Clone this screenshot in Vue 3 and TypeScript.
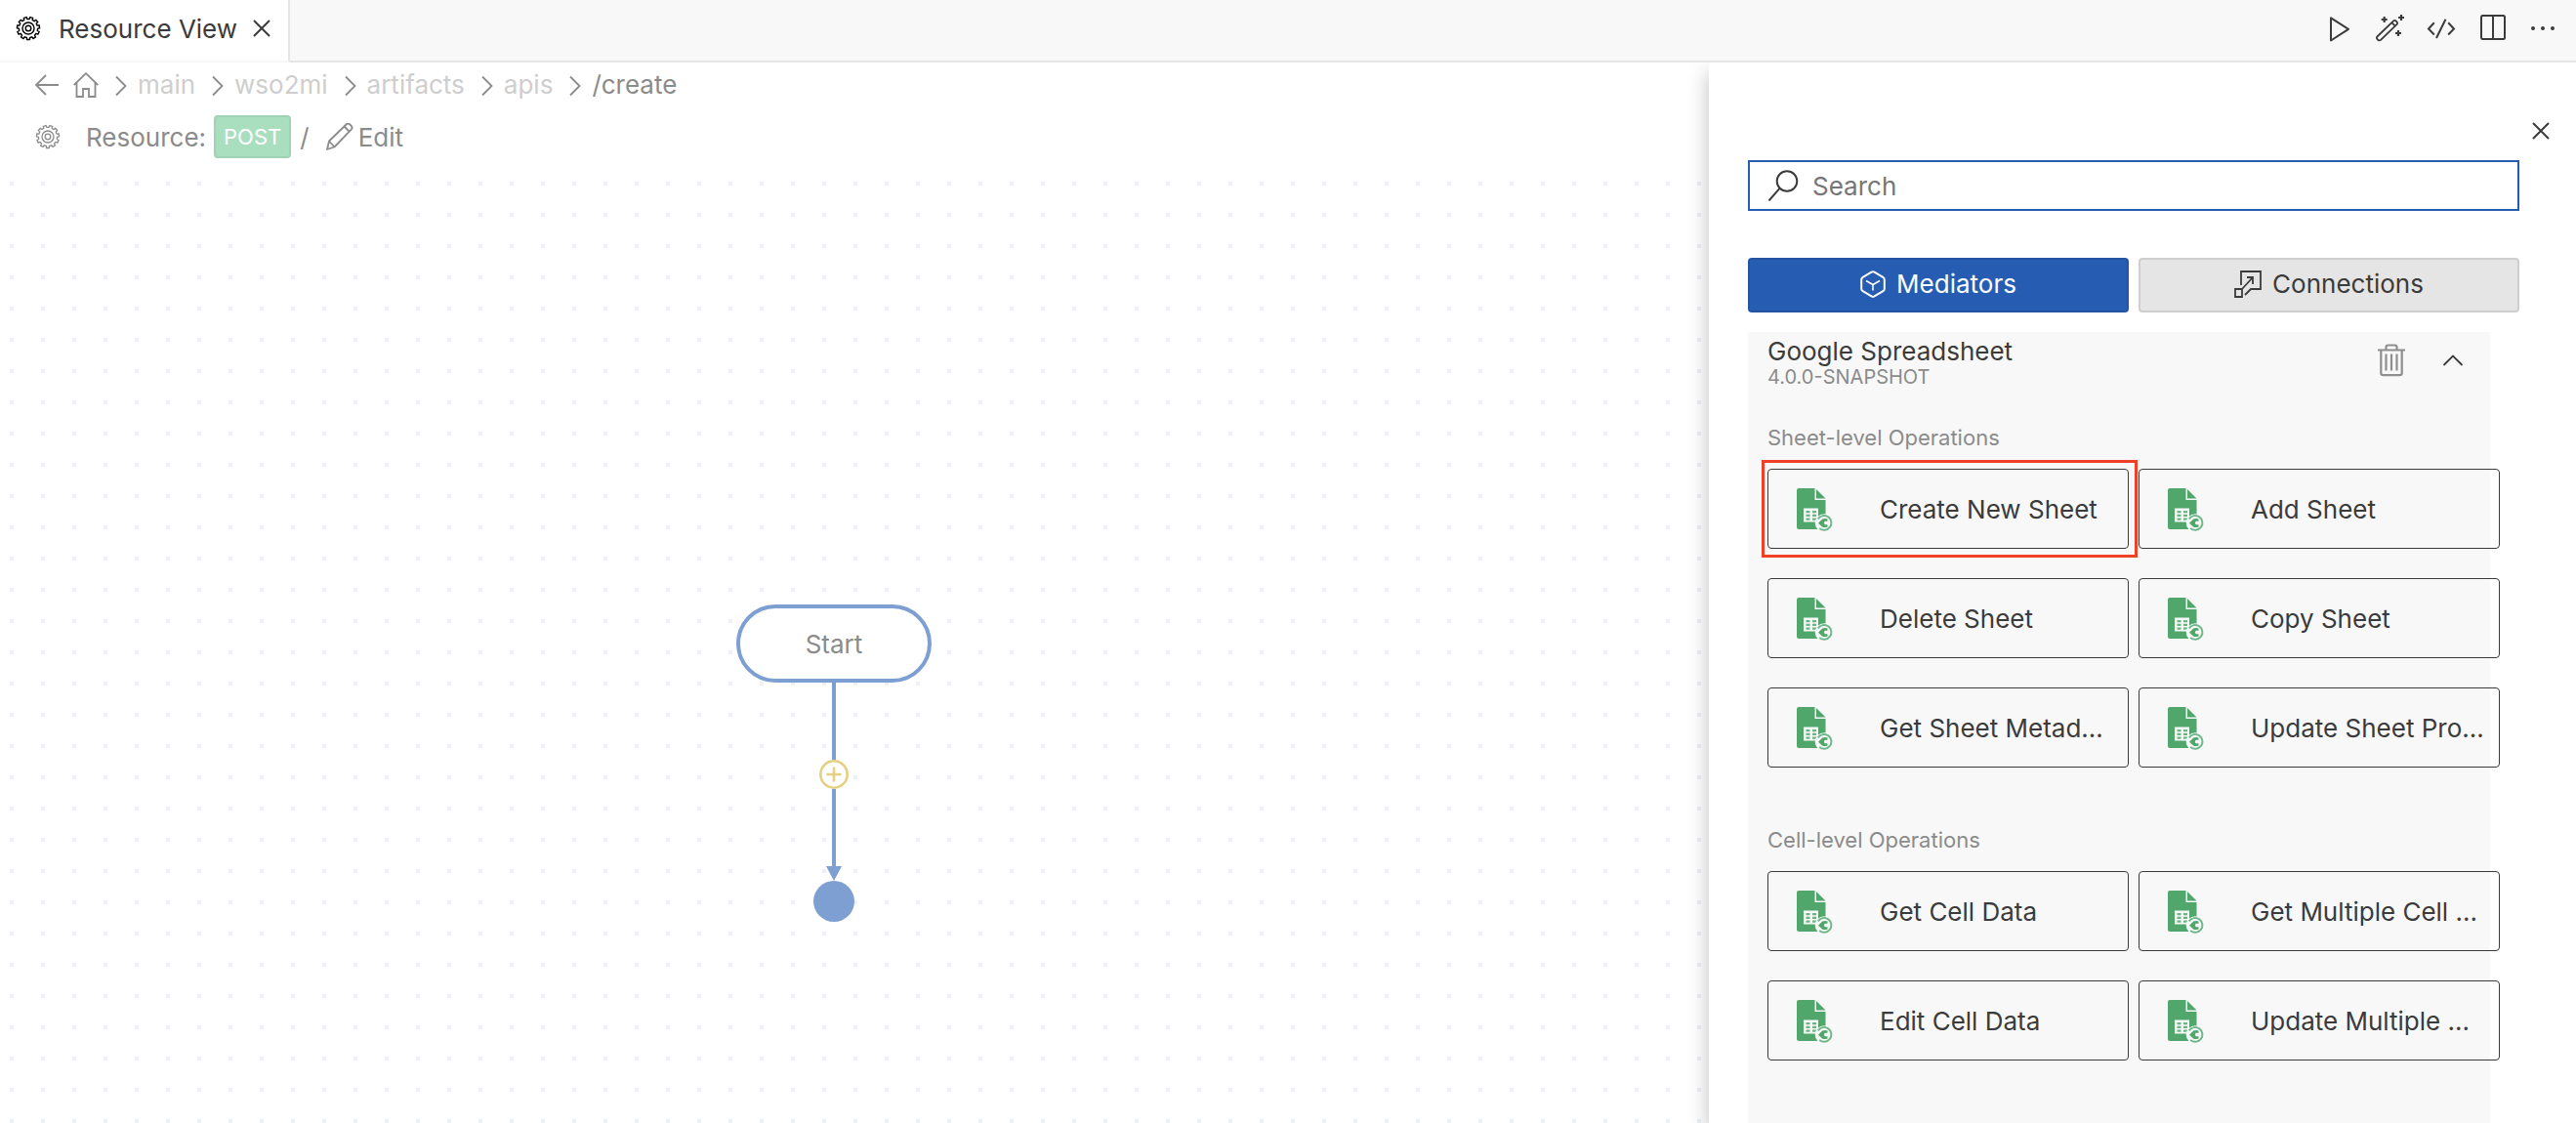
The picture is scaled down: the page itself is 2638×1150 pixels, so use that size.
<script setup lang="ts">
import { ref } from 'vue'

interface Operation {
  name: string
  highlighted?: boolean
}

interface OperationGroup {
  title: string
  operations: Operation[]
}

const query = ref('')
const crumbs: string[] = ['main', 'wso2mi', 'artifacts', 'apis']

const groups: OperationGroup[] = [
  {
    title: 'Sheet-level Operations',
    operations: [
      { name: 'Create New Sheet', highlighted: true },
      { name: 'Add Sheet' },
      { name: 'Delete Sheet' },
      { name: 'Copy Sheet' },
      { name: 'Get Sheet Metad...' },
      { name: 'Update Sheet Pro...' },
    ],
  },
  {
    title: 'Cell-level Operations',
    operations: [
      { name: 'Get Cell Data' },
      { name: 'Get Multiple Cell ...' },
      { name: 'Edit Cell Data' },
      { name: 'Update Multiple ...' },
    ],
  },
]

// Outline of a gear with evenly spaced teeth, centred in a 26 x 26 box.
function gearOutline(teeth: number, outer: number, inner: number): string {
  const step = (Math.PI * 2) / teeth
  const points: string[] = []
  for (let i = 0; i < teeth; i++) {
    const mid = (i + 0.5) * step - Math.PI / 2
    const corners: [number, number][] = [
      [inner, -0.3],
      [outer, -0.22],
      [outer, 0.22],
      [inner, 0.3],
    ]
    for (const [radius, offset] of corners) {
      const angle = mid + offset * step
      points.push(`${(13 + radius * Math.cos(angle)).toFixed(2)} ${(13 + radius * Math.sin(angle)).toFixed(2)}`)
    }
  }
  return `M${points.join('L')}Z`
}

const gear = gearOutline(11, 11.6, 9.6)
</script>

<template>
  <div class="editor">
    <header class="tabbar">
      <div class="tab">
        <svg class="icon tab-gear" width="26" height="26" viewBox="0 0 26 26" stroke-width="1.4">
          <path :d="gear" />
          <circle cx="13" cy="13" r="6" />
          <circle cx="13" cy="13" r="2.8" />
        </svg>
        <span class="tab-title">Resource View</span>
        <button class="bare" type="button" aria-label="Close tab">
          <svg class="icon" width="18" height="18" viewBox="0 0 18 18" stroke-width="2"><path d="M1 1l16 16M17 1L1 17" /></svg>
        </button>
      </div>
      <nav class="actions" aria-label="Editor actions">
        <button class="bare" type="button" aria-label="Run">
          <svg class="icon" width="32" height="32" viewBox="0 0 32 32" stroke-width="2"><path d="M7 3.3v23.2L25 14.8z" stroke-linejoin="round" /></svg>
        </button>
        <button class="bare" type="button" aria-label="Generate">
          <svg class="icon" width="32" height="32" viewBox="0 0 32 32" stroke-width="1.8">
            <rect x="-0.8" y="13.7" width="26.6" height="5" rx="2" transform="rotate(-44 12.5 16.2)" />
            <path d="M17 7.8l3.6 3.6" />
            <path d="M9.7 2v6M6.7 5h6M27 0v6M24 3h6M24 16v6M21 19h6" stroke-width="2.2" />
          </svg>
        </button>
        <button class="bare" type="button" aria-label="Show source">
          <svg class="icon" width="32" height="32" viewBox="0 0 32 32" stroke-width="2"><path d="M8.8 8.3L3 14.5l5.8 6M23.2 8.3l5.8 6.2-5.8 6M20.5 4.8L11 24" /></svg>
        </button>
        <button class="bare" type="button" aria-label="Split editor">
          <svg class="icon" width="32" height="32" viewBox="0 0 32 32" stroke-width="2"><rect x="5" y="1" width="24" height="24" rx="1.5" /><path d="M17 1v24" /></svg>
        </button>
        <button class="bare" type="button" aria-label="More actions">
          <svg width="32" height="32" viewBox="0 0 32 32" fill="currentColor"><circle cx="6" cy="14" r="2" /><circle cx="16" cy="14" r="2" /><circle cx="26" cy="14" r="2" /></svg>
        </button>
      </nav>
    </header>

    <div class="workspace">
      <main class="stage">
        <nav class="breadcrumbs" aria-label="Breadcrumb">
          <button class="bare" type="button" aria-label="Back">
            <svg class="icon" width="26" height="26" viewBox="0 0 26 26" stroke-width="1.8"><path d="M12 3L2 13l10 10M2 13h23" /></svg>
          </button>
          <button class="bare home" type="button" aria-label="Home">
            <svg class="icon" width="26" height="26" viewBox="0 0 26 26" stroke-width="1.8"><path d="M0.8 13L13 1.2 25.2 13M3.5 10.5V25H10v-8h6v8h6.5V10.5" /></svg>
          </button>
          <template v-for="crumb in crumbs" :key="crumb">
            <svg class="icon chevron" width="12" height="22" viewBox="0 0 12 22" stroke-width="1.8"><path d="M1 1.5L10.5 11 1 20.5" /></svg>
            <a href="#" class="crumb">{{ crumb }}</a>
          </template>
          <svg class="icon chevron" width="12" height="22" viewBox="0 0 12 22" stroke-width="1.8"><path d="M1 1.5L10.5 11 1 20.5" /></svg>
          <span class="crumb-current">/create</span>
        </nav>

        <div class="resource">
          <svg class="icon" width="26" height="26" viewBox="0 0 26 26" stroke-width="1.3">
            <path :d="gear" />
            <circle cx="13" cy="13" r="6" />
            <circle cx="13" cy="13" r="2.8" />
          </svg>
          <span class="resource-label">Resource:</span>
          <span class="method">POST</span>
          <span class="path">/</span>
          <button class="bare edit" type="button">
            <svg class="icon" width="30" height="30" viewBox="0 0 30 30" stroke-width="1.8">
              <path d="M2 28l2-8.5L21.5 2.5c1.2-1.2 2.5-1.2 3.8 0l1.4 1.4c1.2 1.3 1.2 2.5 0 3.8L9.5 25.5zM4 19.5l5.5 6M19.5 4.5l5.500 5.500" stroke-linejoin="round" />
            </svg>
            <span class="edit-label">Edit</span>
          </button>
        </div>

        <section class="canvas" aria-label="Resource flow">
          <div class="flow">
            <div class="start">Start</div>
            <div class="link"></div>
            <button class="bare" type="button" aria-label="Add mediator">
              <svg width="30" height="30" viewBox="0 0 30 30" fill="#fff" stroke="#e5d081" stroke-linecap="round"><circle cx="15" cy="15" r="13.7" stroke-width="2.6" /><path d="M15 8.5v13M8.5 15h13" stroke-width="2.6" /></svg>
            </button>
            <div class="link"></div>
            <svg width="16" height="15" viewBox="0 0 16 15" fill="#7d9fd2"><path d="M0 0h16L8 15z" /></svg>
            <div class="end"></div>
          </div>
        </section>
      </main>

      <aside class="drawer">
        <button class="bare drawer-close" type="button" aria-label="Close panel">
          <svg class="icon" width="18" height="18" viewBox="0 0 18 18" stroke-width="2"><path d="M1 1l16 16M17 1L1 17" /></svg>
        </button>

        <label class="search">
          <svg class="icon" width="32" height="32" viewBox="0 0 32 32" stroke-width="2"><circle cx="20" cy="11.5" r="10.3" /><path d="M12.5 18.8L1.5 31.5" /></svg>
          <input v-model="query" type="text" placeholder="Search" aria-label="Search" />
        </label>

        <div class="switcher">
          <button class="switch primary" type="button">
            <svg class="icon" width="26" height="28" viewBox="0 0 26 28" stroke-width="2">
              <path d="M11.5 1.6q1.5-.8 3 0l8.800 5.200q1.500.9 1.500 2.500v9.400q0 1.600-1.500 2.500l-8.800 5.200q-1.500.8-3 0l-8.800-5.200q-1.500-.9-1.500-2.500V9.300q0-1.600 1.500-2.500z" />
              <path d="M6 10.5l7 4 7-4M13 14.5v6" stroke-width="1.6" />
            </svg>
            Mediators
          </button>
          <button class="switch" type="button">
            <svg class="icon" width="28" height="28" viewBox="0 0 28 28" stroke-width="1.8">
              <path d="M7 15V1h20v18H17l-6 6M1 19h7v8H1zM8 19L19 7M13 7h6v7" />
            </svg>
            Connections
          </button>
        </div>

        <section class="connector">
          <div class="connector-head">
            <div class="connector-name">
              <h2>Google Spreadsheet</h2>
              <p>4.0.0-SNAPSHOT</p>
            </div>
            <button class="bare trash" type="button" aria-label="Remove connector">
              <svg class="icon" width="28" height="34" viewBox="0 0 28 34" stroke-width="2.2">
                <path d="M0 6.500h28M8.500 6V3.500q0-2 2-2h7q2 0 2 2V6M3.300 7v23q0 2.200 2.200 2.200h17q2.200 0 2.200-2.200V7M8.500 10.500v17M14 10.500v17M19.500 10.500v17" />
              </svg>
            </button>
            <button class="bare" type="button" aria-label="Collapse">
              <svg class="icon" width="22" height="12" viewBox="0 0 22 12" stroke-width="1.8"><path d="M1.5 11L11 1.5 20.5 11" /></svg>
            </button>
          </div>

          <div v-for="group in groups" :key="group.title" class="group">
            <h3>{{ group.title }}</h3>
            <div class="operations">
              <button
                v-for="operation in group.operations"
                :key="operation.name"
                type="button"
                :class="['operation', { highlighted: operation.highlighted }]"
              >
                <svg width="38" height="46" viewBox="0 0 38 46">
                  <path d="M3 1h16.500v12h11v27.500q0 2.500-2.500 2.500H3Q1 43 1 41V3q0-2 2-2z" fill="#51a66c" />
                  <path d="M21 2l9.500 9.500H21z" fill="#51a66c" />
                  <path d="M8 21.500h15v14H8z" fill="#f8f8f8" />
                  <path d="M10.500 24h4v2.200h-4zM17 24h4v2.200h-4zM10.500 27.800h4V30h-4zM17 27.800h4V30h-4zM10.500 31.600h4v2.200h-4zM17 31.600h4v2.200h-4z" fill="#6bb582" />
                  <circle cx="29" cy="36.500" r="9.300" fill="#f8f8f8" />
                  <path d="M22.800 32.400a7.400 7.400 0 1 1 1.400 9.600" fill="none" stroke="#70b98a" stroke-width="2" />
                  <path d="M23 36.800l4.200-4.300q3-1 5.300 0v2.200h-2.800q-1.500 1.800 0 3.600h2.800v2.200q-3 1-5.500 0z" fill="#51a66c" />
                </svg>
                <span>{{ operation.name }}</span>
              </button>
            </div>
          </div>
        </section>
      </aside>
    </div>
  </div>
</template>

<style>
body {
  margin: 0;
}
</style>

<style scoped>
.editor {
  display: flex;
  flex-direction: column;
  height: 100vh;
  overflow: hidden;
  background: #fff;
  color: #3b3b3b;
  font: 26px/32px Inter, "Liberation Sans", sans-serif;
}

.icon {
  fill: none;
  stroke: currentColor;
}

svg {
  display: block;
  flex: none;
}

button,
input {
  font: inherit;
  color: inherit;
}

.bare {
  display: flex;
  align-items: center;
  padding: 0;
  border: 0;
  background: none;
}

.tabbar {
  display: flex;
  flex: none;
  justify-content: space-between;
  height: 64px;
  background: #f8f8f8;
}

.tab {
  display: flex;
  align-items: center;
  padding: 0 18px 4px 16px;
  border-right: 2px solid #e5e5e5;
  border-bottom: 2px solid #f8f8f8;
  background: #fff;
}

.tab-gear {
  color: #000;
}

.tab-title {
  padding-top: 2px;
  margin: 0 16px 0 18px;
}

.actions {
  display: flex;
  flex: 1;
  align-items: center;
  justify-content: flex-end;
  gap: 20px;
  padding-right: 18px;
  border-bottom: 2px solid #e5e5e5;
}

.workspace {
  display: grid;
  flex: 1;
  grid-template-columns: minmax(0, 1750fr) minmax(0, 888fr);
  min-height: 0;
  overflow: hidden;
}

.stage {
  display: flex;
  flex-direction: column;
  color: #8b8b8b;
}

.breadcrumbs {
  display: flex;
  align-items: center;
  height: 32px;
  padding: 7px 0 0 35px;
}

.home {
  margin-left: 14px;
}

.chevron {
  margin: 2px 11px 0 17px;
}

.crumb {
  color: #cecece;
  text-decoration: none;
}

.resource {
  display: flex;
  align-items: center;
  height: 44px;
  padding: 15px 0 14px 36px;
}

.resource-label {
  padding-top: 2px;
  margin: 0 8px 0 26px;
}

.method {
  padding: 4px 8px;
  border: 2px solid #9fd3b4;
  border-radius: 4px;
  background: #a9dfbf;
  color: #fff;
  font-size: 22px;
}

.path {
  padding-top: 2px;
  margin: 0 16px 0 9px;
}

.edit {
  gap: 4px;
}

.edit-label {
  padding-top: 2px;
}

.canvas {
  position: relative;
  flex: 1;
  background: conic-gradient(from 90deg at 28px 28px, #edf1f5 90deg, transparent 0) -18px -18px / 32px 32px;
}

.flow {
  position: absolute;
  top: 443px;
  left: 754px;
  display: flex;
  flex-direction: column;
  align-items: center;
}

.start {
  box-sizing: border-box;
  width: 200px;
  height: 80px;
  border: 4px solid #7d9fd2;
  border-radius: 40px;
  background: #fff;
  line-height: 74px;
  text-align: center;
}

.link {
  width: 4px;
  height: 79px;
  background: #7d9fd2;
}

.end {
  width: 42px;
  height: 42px;
  border-radius: 50%;
  background: #7d9fd2;
}

.drawer {
  position: relative;
  display: flex;
  flex-direction: column;
  padding: 61px 58px 0 40px;
  background: #fff;
  box-shadow: 0 10px 20px rgba(0, 0, 0, 0.26);
}

.drawer-close {
  align-self: flex-end;
  margin: 0 -31px 21px 0;
}

.search {
  display: flex;
  flex: none;
  align-items: center;
  gap: 14px;
  height: 48px;
  padding: 0 18px;
  border: 2px solid #265db3;
}

.search input {
  flex: 1;
  min-width: 0;
  padding: 2px 0 0;
  border: 0;
  outline: 0;
  background: none;
}

.search input::placeholder {
  color: #767676;
}

.switcher {
  display: grid;
  flex: none;
  grid-template-columns: 1fr 1fr;
  gap: 10px;
  margin: 48px 0 20px;
}

.switch {
  display: flex;
  align-items: center;
  justify-content: center;
  gap: 11px;
  height: 56px;
  padding: 0 0 2px;
  border: 2px solid #cecece;
  border-radius: 4px;
  background: #e5e5e5;
}

.switch.primary {
  border-color: #2455a3;
  background: #265db3;
  color: #fff;
}

.connector {
  flex: 1 0 auto;
  margin-right: 30px;
  padding: 6px 20px 60px;
  background: #f8f8f8;
}

.connector-head {
  display: flex;
  align-items: flex-start;
  padding-right: 7px;
}

.connector-head .bare {
  height: 46px;
}

.connector-name {
  flex: 1;
}

h2,
h3,
p {
  margin: 0;
  font-weight: 400;
}

h2 {
  font-size: 26px;
  line-height: 28px;
}

p {
  color: #8b8b8b;
  font-size: 20px;
  line-height: 24px;
}

.trash {
  margin-right: 38px;
  color: #8f8f8f;
}

.group {
  margin: 34px -30px 0 0;
}

.group + .group {
  margin-top: 58px;
}

h3 {
  margin-bottom: 16px;
  color: #8b8b8b;
  font-size: 22px;
  line-height: 32px;
}

.operations {
  display: grid;
  grid-template-columns: repeat(2, minmax(0, 1fr));
  gap: 30px 10px;
}

.operation {
  position: relative;
  display: flex;
  align-items: center;
  gap: 48px;
  height: 82px;
  padding: 2px 0 0 28px;
  border: 1px solid #3b3b3b;
  border-radius: 4px;
  background: none;
  text-align: left;
  white-space: nowrap;
}

.highlighted::after {
  position: absolute;
  inset: -10px -10px -10px -7px;
  border: 3px solid #ee4126;
  content: "";
}
</style>
